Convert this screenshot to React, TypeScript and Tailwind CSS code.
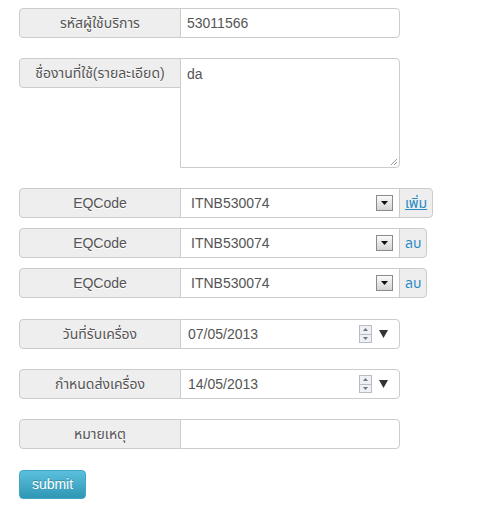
import React from 'react';

const font = { fontFamily: '"Liberation Sans", Arial, "Noto Sans Thai", "Noto Sans", sans-serif' };

function Label({ children, className = '' }: { children: React.ReactNode; className?: string }) {
  return (
    <div
      className={`flex h-[30px] w-[162px] shrink-0 items-center justify-center rounded-l-[4px] border border-[#ccc] bg-[#eee] text-[14px] text-[#555] [text-shadow:0_1px_0_#fff] ${className}`}
    >
      {children}
    </div>
  );
}

function SelectArrow() {
  return (
    <div className="flex h-[16px] w-[17px] items-center justify-center border border-[#8a8a8a] bg-[linear-gradient(180deg,#fafafa,#d4d4d4)]">
      <svg width="7" height="4" viewBox="0 0 7 4">
        <path d="M0 0h7L3.5 4z" fill="#111" />
      </svg>
    </div>
  );
}

function DateSpinner() {
  return (
    <div className="flex items-center gap-[7px]">
      <div className="flex h-[18px] w-[13px] flex-col border border-[#b8bcc4] bg-[#eef0f4]">
        <div className="flex flex-1 items-center justify-center border-b border-[#b8bcc4]">
          <svg width="5" height="3" viewBox="0 0 5 3">
            <path d="M0 3h5L2.5 0z" fill="#6b7686" />
          </svg>
        </div>
        <div className="flex flex-1 items-center justify-center">
          <svg width="5" height="3" viewBox="0 0 5 3">
            <path d="M0 0h5L2.5 3z" fill="#6b7686" />
          </svg>
        </div>
      </div>
      <svg width="9" height="8" viewBox="0 0 9 8">
        <path d="M0 0h9L4.5 8z" fill="#333" />
      </svg>
    </div>
  );
}

function EqRow({ action, underline }: { action: string; underline?: boolean }) {
  return (
    <div className="flex">
      <Label>EQCode</Label>
      <div className="-ml-px flex h-[30px] w-[220px] items-center justify-between border border-[#ccc] bg-white pl-[10px] pr-[6px] text-[14px] text-[#555]">
        <span>ITNB530074</span>
        <SelectArrow />
      </div>
      <div className="-ml-px flex h-[30px] items-center rounded-r-[4px] border border-[#ccc] bg-[#eee] px-[5px] text-[14px] text-[#2a8ac4]">
        <span className={underline ? 'underline' : ''}>{action}</span>
      </div>
    </div>
  );
}

function DateRow({ label, value }: { label: string; value: string }) {
  return (
    <div className="flex">
      <Label>{label}</Label>
      <div className="-ml-px flex h-[30px] w-[220px] items-center justify-between rounded-r-[4px] border border-[#ccc] bg-white pl-[7px] pr-[11px] text-[14px] text-[#555]">
        <span>{value}</span>
        <DateSpinner />
      </div>
    </div>
  );
}

export default function App() {
  return (
    <div className="min-h-[510px] w-[484px] bg-white pl-[19px] pt-[8px]" style={font}>
      <div className="flex">
        <Label>รหัสผู้ใช้บริการ</Label>
        <div className="-ml-px flex h-[30px] w-[220px] items-center rounded-r-[4px] border border-[#ccc] bg-white px-[6px] text-[14px] text-[#555]">
          53011566
        </div>
      </div>

      <div className="mt-[20px] flex items-start">
        <Label>ชื่องานที่ใช้(รายละเอียด)</Label>
        <div className="relative -ml-px h-[110px] w-[220px] rounded-r-[4px] border border-[#ccc] bg-white px-[6px] pt-[5px] text-[14px] text-[#555]">
          da
          <svg className="absolute bottom-[2px] right-[2px]" width="7" height="7" viewBox="0 0 7 7">
            <path d="M7 1L1 7M7 4L4 7" stroke="#999" strokeWidth="1" />
          </svg>
        </div>
      </div>

      <div className="mt-[20px] flex flex-col gap-[10px]">
        <EqRow action="เพิ่ม" underline />
        <EqRow action="ลบ" />
        <EqRow action="ลบ" />
      </div>

      <div className="mt-[21px] flex flex-col gap-[20px]">
        <DateRow label="วันที่รับเครื่อง" value="07/05/2013" />
        <DateRow label="กำหนดส่งเครื่อง" value="14/05/2013" />
        <div className="flex">
          <Label>หมายเหตุ</Label>
          <div className="-ml-px h-[30px] w-[220px] rounded-r-[4px] border border-[#ccc] bg-white" />
        </div>
      </div>

      <button className="mt-[21px] h-[29px] w-[67px] rounded-[4px] border border-[#3fa6c8] bg-[linear-gradient(180deg,#5bc0de,#2f96b4)] text-[14px] text-white [text-shadow:0_-1px_0_rgba(0,0,0,0.25)]">
        submit
      </button>
    </div>
  );
}
